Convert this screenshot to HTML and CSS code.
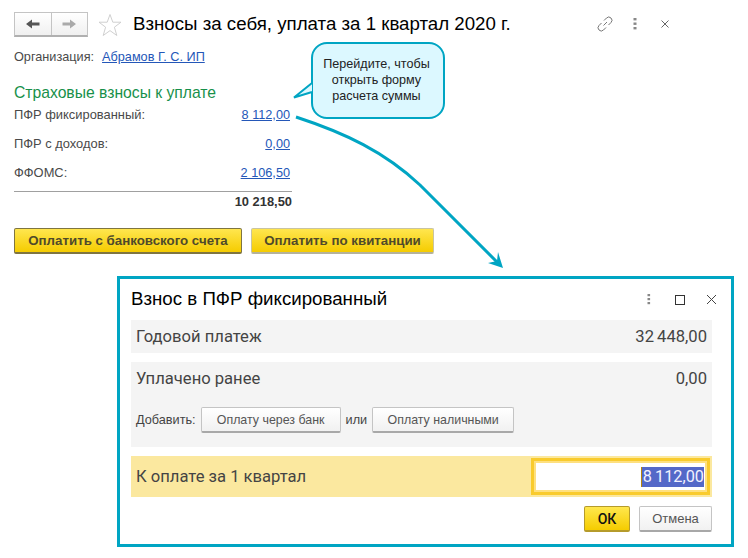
FILE: index.html
```html
<!DOCTYPE html>
<html lang="ru">
<head>
<meta charset="utf-8">
<title>Взносы за себя</title>
<link rel="stylesheet" href="styles.css">
</head>
<body>
<main class="form">
  <header class="form-head">
    <div class="nav">
      <span class="nav-btn"><svg width="14" height="10" viewBox="0 0 14 10"><path d="M0 5 L6 0.5 V3.5 H13.5 V6.5 H6 V9.5 Z" fill="#555"/></svg></span>
      <span class="nav-btn"><svg width="14" height="10" viewBox="0 0 14 10"><path d="M14 5 L8 0.5 V3.5 H0.5 V6.5 H8 V9.5 Z" fill="#aaa"/></svg></span>
    </div>
    <svg class="star" width="24" height="24" viewBox="0 0 24 24"><path d="M12 1.5 L14.8 9.2 H23 L16.4 14.2 L18.8 22.5 L12 17.6 L5.2 22.5 L7.6 14.2 L1 9.2 H9.2 Z" fill="#fff" stroke="#d0d0d0"/></svg>
    <h1 class="title">Взносы за себя, уплата за 1 квартал 2020 г.</h1>
    <div class="head-tools">
      <svg class="link-ico" width="18" height="18" viewBox="0 0 18 18" fill="none" stroke="#777" stroke-width="1"><path d="M7.5 10.5 L11 7"/><path d="M8 5.5 L10.5 3 a3 3 0 0 1 4.5 4.5 L12.5 10"/><path d="M10 12.5 L7.5 15 a3 3 0 0 1 -4.5 -4.5 L5.5 8"/></svg>
      <svg width="4" height="12" viewBox="0 0 4 12" fill="#888"><rect x="0.5" y="0" width="3" height="2.4"/><rect x="0.5" y="4.5" width="3" height="2.4"/><rect x="0.5" y="9" width="3" height="2.4"/></svg>
      <svg class="close-ico" width="10" height="10" viewBox="0 0 10 10" stroke="#666" fill="none"><path d="M1.5 1.5 L8.5 8.5 M8.5 1.5 L1.5 8.5"/></svg>
    </div>
  </header>
  <div class="org"><span>Организация:</span><a href="#">Абрамов Г. С. ИП</a></div>
  <h2 class="section">Страховые взносы к уплате</h2>
  <div class="fees">
    <div class="fee"><span>ПФР фиксированный:</span><a href="#">8 112,00</a></div>
    <div class="fee"><span>ПФР с доходов:</span><a href="#">0,00</a></div>
    <div class="fee"><span>ФФОМС:</span><a href="#">2 106,50</a></div>
    <div class="total">10 218,50</div>
  </div>
  <div class="pay">
    <button class="yellow first">Оплатить с банковского счета</button>
    <button class="yellow second">Оплатить по квитанции</button>
  </div>
</main>

<svg class="overlay" width="748" height="558" viewBox="0 0 748 558">
  <path d="M296 117 C 345 133, 385 152, 420 185 L 499 264" fill="none" stroke="#00a5c3" stroke-width="3"/>
  <path d="M503 268 L 488 263 L 497 261 L 498 252 Z" fill="#00a5c3"/>
</svg>

<aside class="callout">Перейдите, чтобы<br>открыть форму<br>расчета суммы
  <svg class="tail" width="22" height="18" viewBox="0 0 22 18"><path d="M19 1 L1 15.5 L19 10" fill="#dcf8ff" stroke="#00a5c3" stroke-width="2"/></svg>
</aside>

<section class="dialog">
  <div class="dlg-head">
    <h2 class="dlg-title">Взнос в ПФР фиксированный</h2>
    <div class="dlg-tools">
      <svg width="4" height="11" viewBox="0 0 4 11" fill="#888"><rect x="0.5" y="0" width="2.6" height="2.2"/><rect x="0.5" y="4" width="2.6" height="2.2"/><rect x="0.5" y="8" width="2.6" height="2.2"/></svg>
      <svg width="10" height="10" viewBox="0 0 10 10" fill="none" stroke="#333"><rect x="0.5" y="0.5" width="9" height="9"/></svg>
      <svg class="dlg-close" width="11" height="11" viewBox="0 0 11 11" fill="none" stroke="#444"><path d="M1 1 L10 10 M10 1 L1 10"/></svg>
    </div>
  </div>
  <div class="panel line"><span>Годовой платеж</span><span class="num">32 448,00</span></div>
  <div class="panel paid">
    <div class="paid-top"><span>Уплачено ранее</span><span>0,00</span></div>
    <div class="add">
      <span>Добавить:</span>
      <button class="plain bank">Оплату через банк</button>
      <span>или</span>
      <button class="plain cash">Оплату наличными</button>
    </div>
  </div>
  <div class="due">
    <span>К оплате за 1 квартал</span>
    <div class="input"><span class="sel">8 112,00</span></div>
  </div>
  <div class="actions">
    <button class="ok">ОК</button>
    <button class="plain cancel">Отмена</button>
  </div>
</section>
</body>
</html>
```
FILE: styles.css
```css
* { box-sizing: border-box; }
html, body { margin: 0; padding: 0; }
body {
  width: 748px;
  height: 558px;
  background: #fff;
  position: relative;
  overflow: hidden;
  font-family: "Liberation Sans", Arial, sans-serif;
  color: #4a4a4a;
}
.form { padding: 12px 0 0 14px; width: 748px; }
.form-head { display: flex; align-items: center; height: 25px; }
.nav {
  display: flex;
  width: 74px;
  height: 25px;
  border: 1px solid #c4c4c4;
  border-bottom: 2px solid #b0b0b0;
  background: linear-gradient(#fff, #f0f0f0);
}
.nav-btn { flex: 1; display: flex; align-items: center; justify-content: center; }
.nav-btn + .nav-btn { border-left: 1px solid #c4c4c4; }
.star { margin-left: 10px; }
.title {
  margin: -2px 0 0 11px;
  font-size: 18.7px;
  font-weight: 400;
  color: #000;
  white-space: nowrap;
  line-height: 24px;
}
.head-tools {
  margin-left: 85px;
  margin-top: -2px;
  display: flex;
  align-items: center;
  gap: 21px;
}
.link-ico { margin-right: -2px; }
.close-ico { margin-left: 2px; }
.org {
  margin-top: 12px;
  font-size: 12.7px;
  line-height: 16px;
  display: flex;
  gap: 8px;
}
a { color: #2457b8; text-decoration: underline; }
.section {
  margin: 19px 0 0;
  font-size: 15.7px;
  font-weight: 400;
  line-height: 18px;
  color: #17904a;
}
.fees { width: 278px; font-size: 12.9px; margin-top: 5px; }
.fee {
  height: 29px;
  line-height: 16px;
  display: flex;
  justify-content: space-between;
  padding-right: 2px;
}
.fee a { font-size: 12.7px; }
.total {
  margin-top: -3px;
  border-top: 1px solid #a0a0a0;
  padding-top: 2px;
  text-align: right;
  font-weight: 700;
  line-height: 16px;
  color: #333;
}
.pay { display: flex; margin-top: 18px; gap: 9px; }
button { font-family: inherit; padding: 0; cursor: pointer; }
.yellow {
  height: 26px;
  font-size: 13.3px;
  font-weight: 700;
  color: #4f4a2a;
  background: linear-gradient(#ffe64f, #f5cc00);
  border: 1px solid #b9a65a;
  border-bottom: 2px solid #a3a08a;
  border-radius: 2px;
}
.yellow.first { width: 228px; border-color: #7f7540; }
.yellow.second { width: 183px; border-color: #c9c4a0; border-bottom-color: #b5b29a; }
.overlay { position: absolute; left: 0; top: 0; pointer-events: none; }
.callout {
  position: absolute;
  left: 311px;
  top: 42px;
  width: 134px;
  height: 77px;
  padding: 12px 3px 0 0;
  border: 2px solid #00a5c3;
  border-radius: 16px;
  background: #dcf8ff;
  color: #222;
  font-size: 12.6px;
  line-height: 16px;
  text-align: center;
}
.tail { position: absolute; left: -20px; top: 38px; }
.dialog {
  position: absolute;
  left: 117px;
  top: 276px;
  width: 617px;
  height: 271px;
  border: 3px solid #00a5c3;
  background: #fff;
  padding: 0 19px 0 11px;
}
.dlg-head { height: 41px; display: flex; align-items: center; justify-content: space-between; }
.dlg-title { margin: -2px 0 0 0; font-size: 18.7px; font-weight: 400; color: #000; line-height: 24px; }
.dlg-tools { display: flex; align-items: center; gap: 24px; margin-right: -5px; }
.dlg-close { margin-left: -3px; }
.panel { background: #f4f4f4; font-family: Roboto, sans-serif; font-size: 16.6px; color: #444; }
.num { word-spacing: -1px; }
.line {
  height: 33px;
  display: flex;
  justify-content: space-between;
  align-items: center;
  padding: 0 5px;
}
.paid { height: 85px; margin-top: 9px; padding: 0 5px; }
.paid-top { height: 33px; display: flex; justify-content: space-between; align-items: center; }
.add {
  margin-top: 12px;
  display: flex;
  align-items: center;
  font-family: "Liberation Sans", Arial, sans-serif;
  font-size: 12.7px;
}
.plain {
  height: 26px;
  font-size: 12.4px;
  color: #555;
  background: linear-gradient(#fff, #f1f1f1);
  border: 1px solid #c4c4c4;
  border-bottom: 2px solid #a8a8a8;
  border-radius: 2px;
}
.bank { width: 140px; margin: 0 5px; }
.cash { width: 142px; margin-left: 5px; }
.due {
  margin-top: 9px;
  height: 41px;
  background: #fbe89f;
  display: flex;
  align-items: center;
  justify-content: space-between;
  font-family: Roboto, sans-serif;
  font-size: 16.6px;
  color: #444;
  padding: 0 2px 0 5px;
}
.input {
  width: 179px;
  height: 37px;
  border: 3px solid #f9cb2d;
  outline: 2px solid #fee07f;
  outline-offset: -5px;
  background: #fff;
  display: flex;
  align-items: center;
  justify-content: flex-end;
  padding-right: 3px;
}
.sel {
  background: #5468c8;
  color: #f2f2ff;
  height: 20px;
  line-height: 20px;
  width: 63px;
  text-align: right;
  font-size: 16.3px;
  word-spacing: -1px;
  white-space: nowrap;
  border-left: 1px solid #b8860b;
}
.actions { margin-top: 9px; display: flex; justify-content: flex-end; gap: 9px; }
.ok {
  width: 46px;
  height: 26px;
  font-family: Roboto, sans-serif;
  font-size: 14px;
  font-weight: 500;
  color: #111;
  background: linear-gradient(#ffe74d, #f5cc00);
  border: 1px solid #b59b2b;
  border-bottom-width: 2px;
  border-radius: 2px;
}
.cancel { width: 73px; font-size: 13px; }
```
